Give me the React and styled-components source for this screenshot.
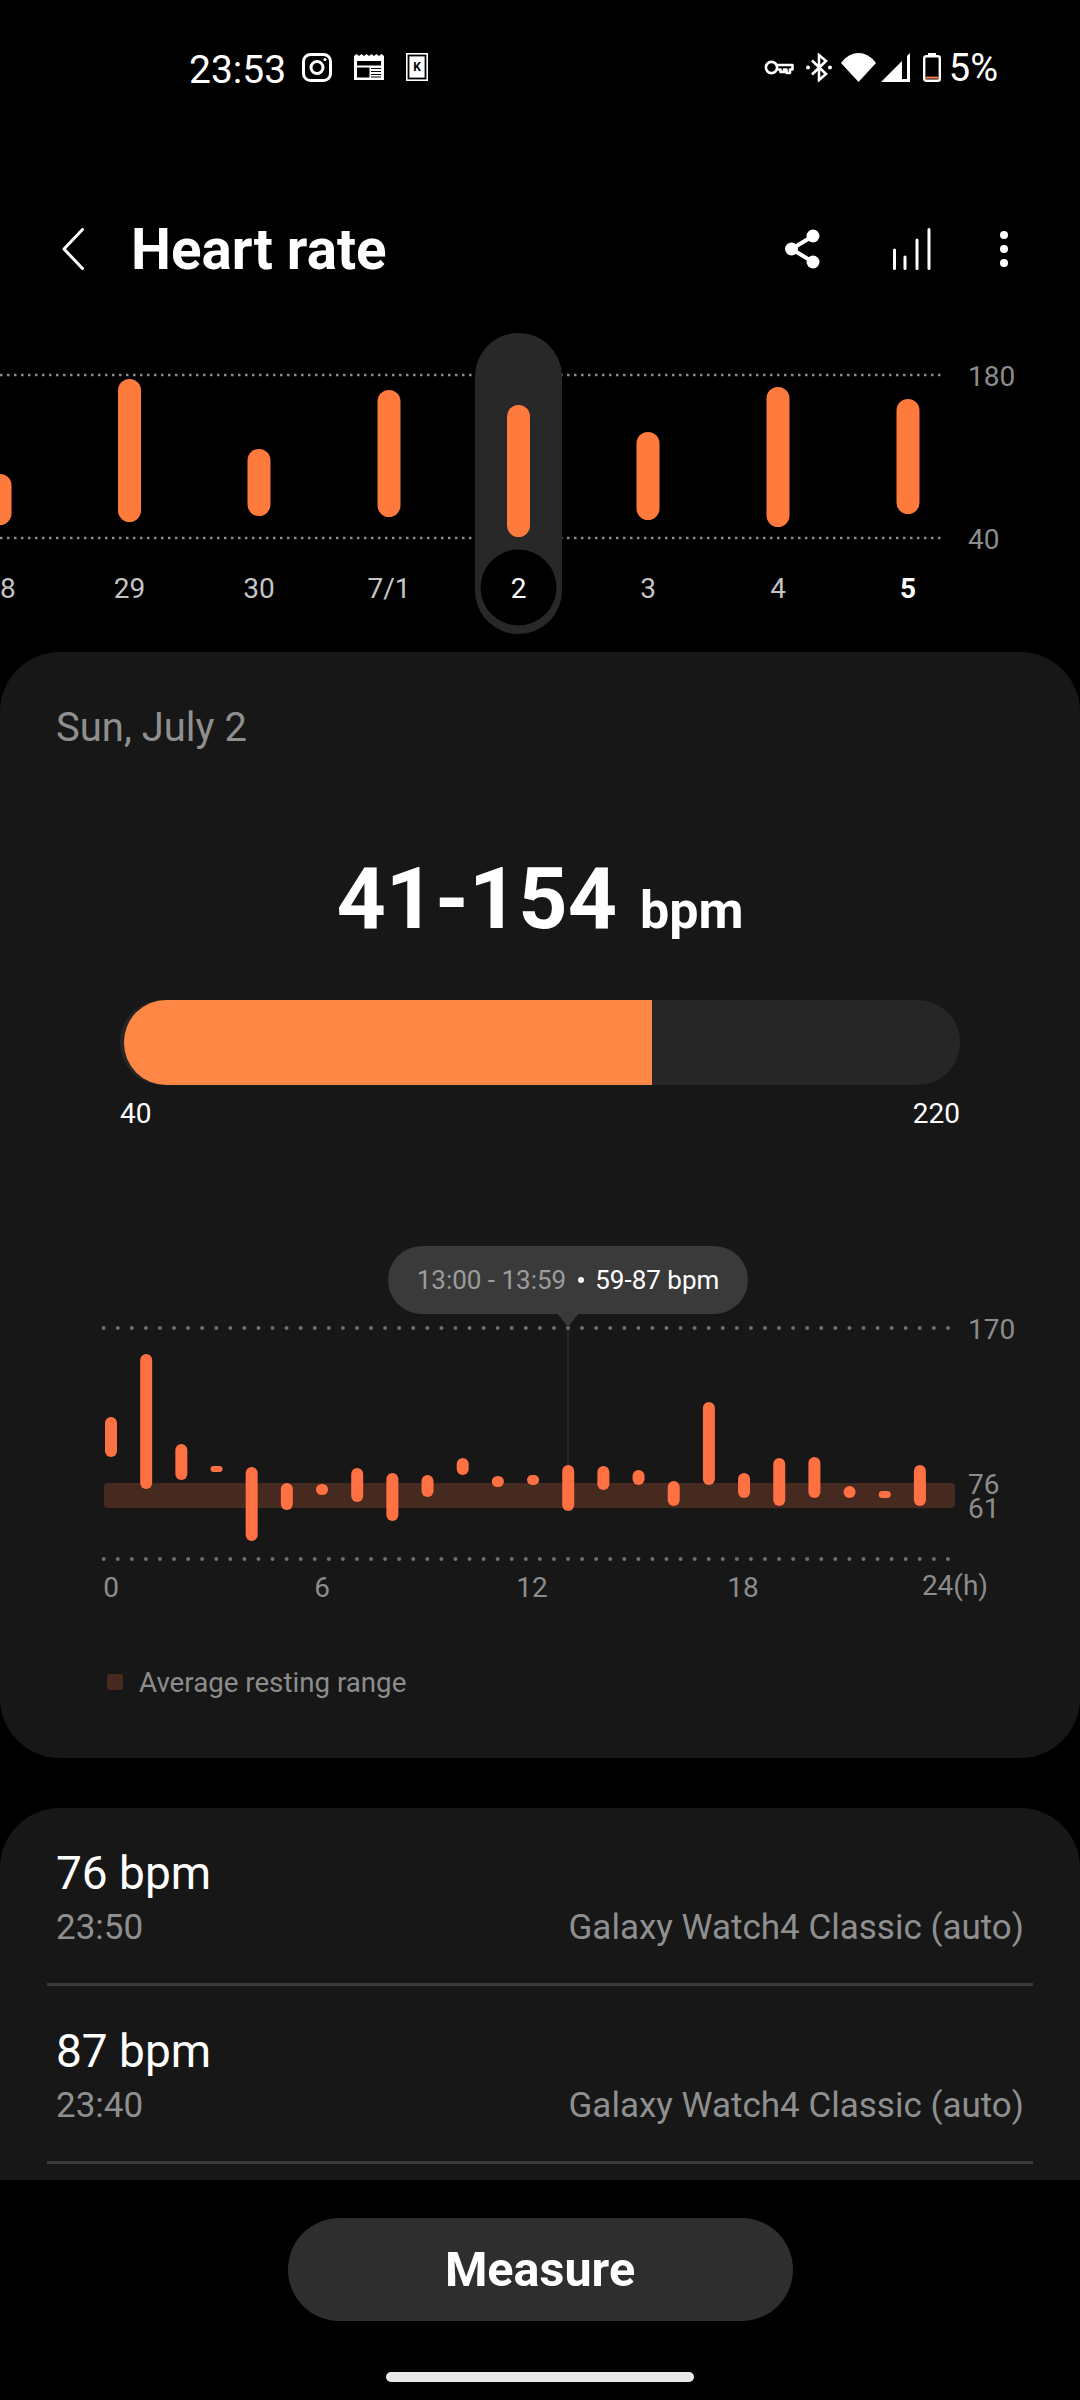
import React from 'react'
import styled, { createGlobalStyle } from 'styled-components'

const GlobalStyle = createGlobalStyle`
  html, body {
    margin: 0;
    background: #000;
  }
  body {
    font-family: Roboto, "Noto Sans", sans-serif;
  }
`

const Screen = styled.div`
  width: 1080px;
  height: 2400px;
  background: #000;
  color: #fff;
  display: flex;
  flex-direction: column;
  overflow: hidden;
`
const StatusBar = styled.div`
  height: 115px;
  padding: 52px 82px 0 189px;
  box-sizing: border-box;
  display: flex;
  align-items: flex-start;
  flex-shrink: 0;
`
const Clock = styled.span`
  font-size: 39px;
  line-height: 36px;
  width: 113px;
  flex-shrink: 0;
`
const StatusIcons = styled.div`
  display: flex;
  align-items: center;
  height: 32px;
  margin-top: -1px;
  gap: 22px;
`
const StatusRight = styled(StatusIcons)`
  margin-left: auto;
  gap: 0;
`
const StatusSlot = styled.span`
  display: flex;
  margin-left: ${props => props.$left || 0}px;
`
const Percent = styled.span`
  font-size: 38px;
  line-height: 36px;
  margin: 2px 0 0 8px;
`
const Header = styled.header`
  height: 168px;
  padding: 0 72.5px 0 62px;
  margin-top: 50px;
  display: flex;
  align-items: center;
  flex-shrink: 0;
`
const Title = styled.h1`
  margin: 2px 0 0 47px;
  font-size: 56.5px;
  font-weight: 700;
`
const HeaderActions = styled.div`
  margin-left: auto;
  display: flex;
  align-items: center;
  gap: 69px;
`
const ShareSlot = styled.span`
  display: flex;
  margin-right: 4px;
`
const ChartSvg = styled.svg`
  display: block;
  flex-shrink: 0;
  font-family: Roboto, sans-serif;
`
const Main = styled.main`
  flex: 1;
  min-height: 0;
  overflow: hidden;
  display: flex;
  flex-direction: column;
  gap: 50px;
`
const Card = styled.section`
  background: #171717;
  border-radius: 60px;
  padding: 54px 56px 56px;
  flex-shrink: 0;
`
const DateLabel = styled.div`
  height: 44px;
  line-height: 44px;
  font-size: 40px;
  color: #8f8f8f;
`
const Range = styled.div`
  height: 100px;
  margin-top: 99px;
  display: flex;
  justify-content: center;
  align-items: baseline;
  line-height: 100px;
  font-weight: 700;
  gap: 23px;
`
const RangeValue = styled.span`
  font-size: 86px;
`
const RangeUnit = styled.span`
  font-size: 52px;
`
const Gauge = styled.div`
  height: 85px;
  margin: 51px 64px 0;
  padding-left: 4px;
  background: #262626;
  border-radius: 42px;
`
const GaugeFill = styled.div`
  height: 100%;
  background: #ff8746;
  border-radius: 42px 0 0 42px;
`
const GaugeLabels = styled.div`
  margin: 12px 64px 0;
  display: flex;
  justify-content: space-between;
  font-size: 28px;
  line-height: 34px;
  color: #fff;
`
const DayChart = styled.div`
  position: relative;
  margin: 115px -56px 0;
  height: 374px;
`
const Tooltip = styled.div`
  position: absolute;
  left: 388px;
  top: 0;
  width: 360px;
  height: 68px;
  border-radius: 34px;
  background: #3a3a3a;
  display: flex;
  align-items: center;
  justify-content: center;
  font-size: 26px;
  color: #fff;
  white-space: nowrap;

  &:after {
    content: '';
    position: absolute;
    left: 169px;
    top: 67px;
    border-style: solid;
    border-width: 14px 11px 0;
    border-color: #3a3a3a transparent transparent;
  }
`
const TooltipTime = styled.span`
  color: #9c9c9c;
`
const TooltipDot = styled.span`
  width: 6px;
  height: 6px;
  margin: 0 11px 0 12px;
  border-radius: 50%;
  background: #fff;
`
const Legend = styled.div`
  margin: 42px 0 0 51px;
  height: 40px;
  display: flex;
  align-items: center;
  gap: 16px;
  font-size: 27.7px;
  color: #8c8c8c;
`
const LegendSwatch = styled.span`
  width: 16px;
  height: 16px;
  border-radius: 2px;
  background: #472a1f;
`
const ListCard = styled.section`
  flex: 1;
  min-height: 0;
  background: #171717;
  border-radius: 60px 60px 0 0;
  padding: 0 47px;
  overflow: hidden;
`
const Reading = styled.div`
  height: 178px;
  padding: 39px 9px 0;
  box-sizing: border-box;
  border-bottom: 3px solid #3a3a3a;
`
const ReadingValue = styled.div`
  font-size: 46px;
  line-height: 52px;
`
const ReadingMeta = styled.div`
  margin-top: 7px;
  display: flex;
  justify-content: space-between;
  font-size: 35px;
  line-height: 44px;
  color: #8f8f8f;
`
const Footer = styled.footer`
  height: 220px;
  flex-shrink: 0;
  background: #000;
  display: flex;
  flex-direction: column;
  align-items: center;
  padding-top: 38px;
  box-sizing: border-box;
`
const MeasureButton = styled.button`
  width: 505px;
  height: 103px;
  border: none;
  border-radius: 52px;
  background: #2e2e2e;
  color: #fff;
  font-family: inherit;
  font-size: 48.5px;
  font-weight: 700;
`
const HomeBar = styled.div`
  width: 308px;
  height: 10px;
  margin-top: 51px;
  border-radius: 5px;
  background: #e8e8e8;
`

const BAR = '#ff7a3d'
const DOT = '#6e6e6e'
const AXIS = '#8c8c8c'

const days = [
  { label: '28', x: 0, top: 474, bottom: 525 },
  { label: '29', x: 129.5, top: 379, bottom: 522 },
  { label: '30', x: 259, top: 449, bottom: 516 },
  { label: '7/1', x: 389, top: 390, bottom: 517 },
  { label: '2', x: 518.5, top: 405, bottom: 537, selected: true },
  { label: '3', x: 648, top: 432, bottom: 520 },
  { label: '4', x: 778, top: 387, bottom: 527 },
  { label: '5', x: 908, top: 399, bottom: 514, today: true }
]

const hours = [
  [1417, 1457], [1354, 1489], [1444, 1480], [1466, 1472], [1467, 1541], [1483, 1510],
  [1484, 1495], [1468, 1502], [1473, 1521], [1475, 1497], [1458, 1475], [1476, 1487],
  [1475, 1485], [1465, 1511], [1466, 1490], [1470, 1485], [1481, 1506], [1402, 1485],
  [1473, 1498], [1458, 1506], [1457, 1498], [1486, 1498], [1491, 1498], [1465, 1506]
]

const readings = [
  { value: '76 bpm', time: '23:50' },
  { value: '87 bpm', time: '23:40' }
]

const Instagram = () => (
  <svg width="30" height="29" viewBox="0 0 30 29" fill="none" stroke="#fff" strokeWidth="3">
    <rect x="1.5" y="1.5" width="27" height="26" rx="7" />
    <circle cx="15" cy="14.5" r="6" />
    <circle cx="23" cy="6.5" r="1.6" fill="#fff" stroke="none" />
  </svg>
)

const News = () => (
  <svg width="30" height="26" viewBox="0 0 30 26">
    <path d="M0 2 L2.5 0 L5 2 L7.5 0 L10 2 L12.5 0 L15 2 L17.5 0 L20 2 L22.5 0 L25 2 L27.5 0 L30 2 V26 H0 Z" fill="#fff" />
    <rect x="3" y="7" width="24" height="4.5" fill="#000" />
    <rect x="3" y="13.5" width="12.5" height="10" fill="#000" />
    <path d="M17 14.5 H27 M17 17.5 H27 M17 20.5 H27 M17 23 H27" stroke="#000" strokeWidth="1.2" />
  </svg>
)

const KindleBadge = () => (
  <svg width="22" height="28" viewBox="0 0 22 28">
    <rect width="22" height="28" fill="#fff" />
    <rect x="1.6" y="1.6" width="18.8" height="24.8" fill="#000" />
    <rect x="3.4" y="3.4" width="15.2" height="21.2" fill="#fff" />
    <text x="11" y="18" fill="#000" fontSize="12" fontWeight="700" textAnchor="middle" fontFamily="Roboto">K</text>
  </svg>
)

const VpnKey = () => (
  <svg width="30" height="15" viewBox="0 0 30 15" fill="none" stroke="#fff" strokeWidth="2.6">
    <circle cx="7.5" cy="7.5" r="5.6" />
    <path d="M13 5 H28.5 V9.5 H26 V13 H22.5 V9.5 H20 V12 H16.5 V9.5 H13" strokeLinejoin="round" />
  </svg>
)

const Bluetooth = () => (
  <svg width="26" height="29" viewBox="0 0 26 29" fill="none">
    <path d="M6 7.5 L20 21 L13 27 V2 L20 8 L6 21.5" stroke="#fff" strokeWidth="2.6" />
    <circle cx="2" cy="14.5" r="2" fill="#fff" />
    <circle cx="24" cy="14.5" r="2" fill="#fff" />
  </svg>
)

const Wifi = () => (
  <svg width="35" height="29" viewBox="0 0 35 29">
    <path d="M0 10 C10 -3.3 25 -3.3 35 10 L17.5 29 Z" fill="#fff" />
  </svg>
)

const Signal = () => (
  <svg width="29" height="29" viewBox="0 0 29 29">
    <path d="M29 0 V29 H0 Z M21 8 V26 H26 V3 Z" fill="#fff" fillRule="evenodd" />
  </svg>
)

const Battery = () => (
  <svg width="18" height="29" viewBox="0 0 18 29" fill="none">
    <rect x="5" y="0" width="8" height="4" fill="#fff" />
    <rect x="1.2" y="3.2" width="15.6" height="24.6" rx="2" stroke="#fff" strokeWidth="2.4" />
    <rect x="2.4" y="23.6" width="13.2" height="2" fill="#ff7a50" />
  </svg>
)

const BackIcon = () => (
  <svg width="22" height="42" viewBox="0 0 22 42" fill="none">
    <path d="M20.5 1.5 L2 21 L20.5 40.5" stroke="#fff" strokeWidth="3" strokeLinecap="round" strokeLinejoin="round" />
  </svg>
)

const ShareIcon = () => (
  <svg width="35" height="40" viewBox="0 0 35 40" fill="none">
    <path d="M28 7 L6.5 20 L28 33" stroke="#fff" strokeWidth="4" />
    <circle cx="28" cy="7" r="6.5" fill="#fff" />
    <circle cx="6.5" cy="20" r="6.5" fill="#fff" />
    <circle cx="28" cy="33" r="6.5" fill="#fff" />
  </svg>
)

const TrendIcon = () => (
  <svg width="38" height="42" viewBox="0 0 38 42" fill="none" stroke="#fff" strokeWidth="3" strokeLinecap="round">
    <path d="M1.5 22 V40.5 M12 29 V40.5 M24 12 V40.5 M36 1.5 V40.5" />
  </svg>
)

const MoreIcon = () => (
  <svg width="8" height="36" viewBox="0 0 8 36" fill="#fff">
    <circle cx="4" cy="4" r="4" />
    <circle cx="4" cy="18" r="4" />
    <circle cx="4" cy="32" r="4" />
  </svg>
)

const TrendStrip = () => (
  <ChartSvg width="1080" height="319" viewBox="0 333 1080 319">
    <g stroke="#8a8a8a" strokeWidth="2.5" strokeDasharray="2.5 4.5">
      <line x1="0" x2="943" y1="375" y2="375" />
      <line x1="0" x2="943" y1="538" y2="538" />
    </g>
    <rect x="475" y="333" width="87" height="301" rx="43.5" fill="#282828" />
    <ellipse cx="518.5" cy="587.5" rx="38" ry="38" fill="#000" />
    {days.map(d => (
      <rect key={d.label} x={d.x - 11.5} y={d.top} width="23" height={d.bottom - d.top} rx="11.5" fill={BAR} />
    ))}
    {days.map(d => (
      <text
        key={d.label}
        x={d.x}
        y="598"
        fontSize="28"
        textAnchor="middle"
        fontWeight={d.today ? 700 : 400}
        fill={d.today || d.selected ? '#fff' : '#c4c4c4'}
      >
        {d.label}
      </text>
    ))}
    <text x="968" y="386" fontSize="28" fill={AXIS}>180</text>
    <text x="968" y="549" fontSize="28" fill={AXIS}>40</text>
  </ChartSvg>
)

const xLabels = [
  { text: '0', x: 111, y: 1597 },
  { text: '6', x: 322, y: 1597 },
  { text: '12', x: 532, y: 1597 },
  { text: '18', x: 743, y: 1597 },
  { text: '24(h)', x: 955, y: 1595 }
]

const DayPlot = () => (
  <ChartSvg width="1080" height="374" viewBox="0 1246 1080 374">
    <rect x="104" y="1483" width="851" height="25" rx="4" fill="#472a1f" />
    <line x1="568" x2="568" y1="1328" y2="1470" stroke="#2e2e2e" strokeWidth="1.5" />
    <g stroke={DOT} strokeWidth="4" strokeLinecap="round" strokeDasharray="0 14.07">
      <line x1="103.7" x2="948" y1="1328" y2="1328" />
      <line x1="103.7" x2="948" y1="1559" y2="1559" />
    </g>
    {hours.map(([top, bottom], i) => (
      <rect
        key={i}
        x={105 + i * 35.17}
        y={top}
        width="12"
        height={bottom - top}
        rx={Math.min(6, (bottom - top) / 2)}
        fill="#ff7043"
      />
    ))}
    <text x="968" y="1339" fontSize="28" fill={AXIS}>170</text>
    <text x="968" y="1494" fontSize="28" fill={AXIS}>76</text>
    <text x="968" y="1518" fontSize="28" fill={AXIS}>61</text>
    {xLabels.map(l => (
      <text key={l.text} x={l.x} y={l.y} fontSize="28" textAnchor="middle" fill={AXIS}>{l.text}</text>
    ))}
  </ChartSvg>
)

export default function App() {
  return (
    <Screen>
      <GlobalStyle />
      <StatusBar>
        <Clock>23:53</Clock>
        <StatusIcons>
          <Instagram />
          <News />
          <KindleBadge />
        </StatusIcons>
        <StatusRight>
          <StatusSlot><VpnKey /></StatusSlot>
          <StatusSlot $left={12}><Bluetooth /></StatusSlot>
          <StatusSlot $left={9}><Wifi /></StatusSlot>
          <StatusSlot $left={5}><Signal /></StatusSlot>
          <StatusSlot $left={13}><Battery /></StatusSlot>
          <Percent>5%</Percent>
        </StatusRight>
      </StatusBar>
      <Header>
        <BackIcon />
        <Title>Heart rate</Title>
        <HeaderActions>
          <ShareSlot><ShareIcon /></ShareSlot>
          <TrendIcon />
          <MoreIcon />
        </HeaderActions>
      </Header>
      <TrendStrip />
      <Main>
        <Card>
          <DateLabel>Sun, July 2</DateLabel>
          <Range>
            <RangeValue>41-154</RangeValue>
            <RangeUnit>bpm</RangeUnit>
          </Range>
          <Gauge>
            <GaugeFill style={{ width: `${(528 / 836) * 100}%` }} />
          </Gauge>
          <GaugeLabels>
            <span>40</span>
            <span>220</span>
          </GaugeLabels>
          <DayChart>
            <DayPlot />
            <Tooltip>
              <TooltipTime>13:00 - 13:59</TooltipTime>
              <TooltipDot />
              <span>59-87 bpm</span>
            </Tooltip>
          </DayChart>
          <Legend>
            <LegendSwatch />
            Average resting range
          </Legend>
        </Card>
        <ListCard>
          {readings.map(r => (
            <Reading key={r.time}>
              <ReadingValue>{r.value}</ReadingValue>
              <ReadingMeta>
                <span>{r.time}</span>
                <span>Galaxy Watch4 Classic (auto)</span>
              </ReadingMeta>
            </Reading>
          ))}
        </ListCard>
      </Main>
      <Footer>
        <MeasureButton>Measure</MeasureButton>
        <HomeBar />
      </Footer>
    </Screen>
  )
}
